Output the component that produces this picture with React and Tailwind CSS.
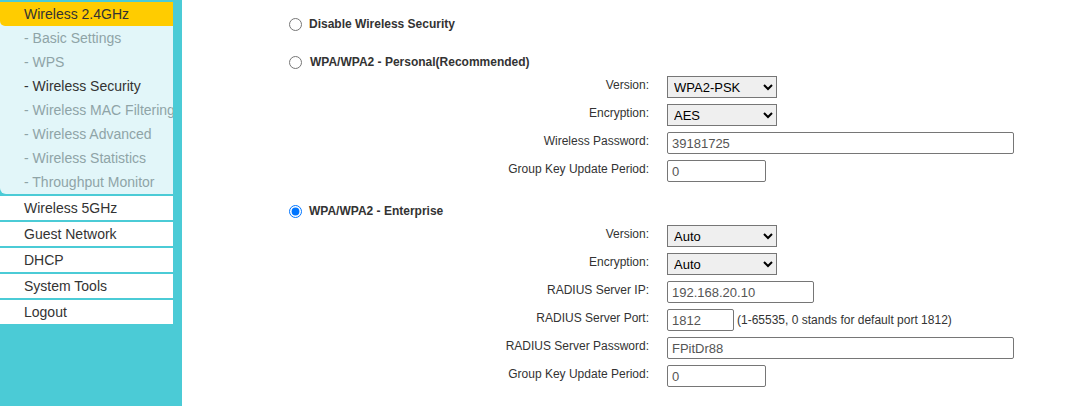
import React from "react";

const font = { fontFamily: '"Liberation Sans", Arial, sans-serif' };

function Row({ label, children }) {
  return (
    <div className="flex h-[28px] items-center">
      <div className="w-[360px] shrink-0 pr-0 text-right text-[12px] leading-[16px] text-[#333] mb-[4px]">
        {label}
      </div>
      <div className="ml-[18px] flex items-center">{children}</div>
    </div>
  );
}

function Select({ value, options }) {
  return (
    <select
      defaultValue={value}
      className="h-[22px] w-[110px] border border-[#767676] bg-[#efefef] pl-[2px] text-[13px] text-black"
      style={font}
    >
      {options.map((o) => (
        <option key={o}>{o}</option>
      ))}
    </select>
  );
}

function Input({ value, w }) {
  return (
    <input
      defaultValue={value}
      className={`h-[22px] ${w} rounded-[2px] border border-[#767676] bg-white px-[4px] text-[13px] text-[#555]`}
      style={font}
    />
  );
}

export default function App() {
  const sub = [
    ["- Basic Settings", false],
    ["- WPS", false],
    ["- Wireless Security", true],
    ["- Wireless MAC Filtering", false],
    ["- Wireless Advanced", false],
    ["- Wireless Statistics", false],
    ["- Throughput Monitor", false],
  ];
  const items = ["Wireless 5GHz", "Guest Network", "DHCP", "System Tools", "Logout"];
  return (
    <div className="flex h-[406px] w-[1084px] overflow-hidden bg-white" style={font}>
      <div className="h-full w-[182px] shrink-0 bg-[#4bcbd6] pt-[2px]">
        <div className="w-[173px]">
          <div className="rounded-bl-[6px] bg-[#e2f6f9]">
            <div className="h-[24px] rounded-bl-[5px] bg-[#ffcc00] pl-[24px] text-[14px] leading-[24px] text-[#333]">
              Wireless 2.4GHz
            </div>
            {sub.map(([t, a]) => (
              <div
                key={t}
                className={`h-[24px] overflow-hidden whitespace-nowrap pl-[24px] text-[14px] leading-[24px] ${
                  a ? "text-[#333]" : "text-[#8fa4a7]"
                }`}
              >
                {t}
              </div>
            ))}
          </div>
          {items.map((t) => (
            <div
              key={t}
              className="mt-[2px] h-[24px] bg-white pl-[24px] text-[14px] leading-[24px] text-[#333]"
            >
              {t}
            </div>
          ))}
        </div>
      </div>
      <div className="flex-1 pl-[107px] pt-[13px]">
        <div className="flex h-[22px] items-center">
          <input type="radio" name="sec" className="h-[13px] w-[13px]" />
          <span className="ml-[7px] text-[12px] font-bold text-[#333]">Disable Wireless Security</span>
        </div>
        <div className="mt-[16px] flex h-[22px] items-center">
          <input type="radio" name="sec" className="h-[13px] w-[13px]" />
          <span className="ml-[8px] text-[12px] font-bold text-[#333] mb-[1px]">WPA/WPA2 - Personal(Recommended)</span>
        </div>
        <Row label="Version:">
          <Select value="WPA2-PSK" options={["Auto", "WPA-PSK", "WPA2-PSK"]} />
        </Row>
        <Row label="Encryption:">
          <Select value="AES" options={["Auto", "TKIP", "AES"]} />
        </Row>
        <Row label="Wireless Password:">
          <Input value="39181725" w="w-[347px]" />
        </Row>
        <Row label="Group Key Update Period:">
          <Input value="0" w="w-[99px]" />
        </Row>
        <div className="mt-[15px] flex h-[22px] items-center">
          <input type="radio" name="sec" defaultChecked className="h-[13px] w-[13px]" />
          <span className="ml-[7px] text-[12px] font-bold text-[#333]">WPA/WPA2 - Enterprise</span>
        </div>
        <Row label="Version:">
          <Select value="Auto" options={["Auto", "WPA", "WPA2"]} />
        </Row>
        <Row label="Encryption:">
          <Select value="Auto" options={["Auto", "TKIP", "AES"]} />
        </Row>
        <Row label="RADIUS Server IP:">
          <Input value="192.168.20.10" w="w-[147px]" />
        </Row>
        <Row label="RADIUS Server Port:">
          <Input value="1812" w="w-[67px]" />
          <span className="ml-[3px] text-[12px] text-[#333]">(1-65535, 0 stands for default port 1812)</span>
        </Row>
        <Row label="RADIUS Server Password:">
          <Input value="FPitDr88" w="w-[347px]" />
        </Row>
        <Row label="Group Key Update Period:">
          <Input value="0" w="w-[99px]" />
        </Row>
      </div>
    </div>
  );
}
